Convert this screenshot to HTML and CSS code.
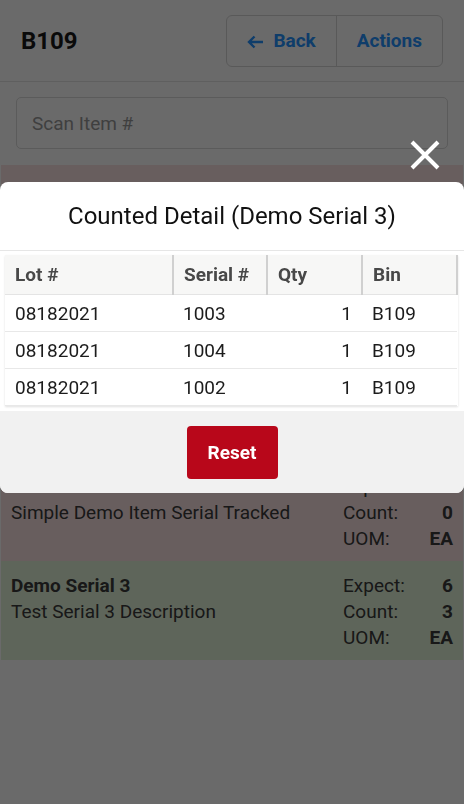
FILE: index.html
```html
<!DOCTYPE html>
<html lang="en">
<head>
  <meta charset="UTF-8">
  <meta name="viewport" content="width=device-width, initial-scale=1.0">
  <title>Bin Count</title>
  <link rel="stylesheet" href="styles.css">
</head>
<body>
  <header class="topbar">
    <h1>B109</h1>
    <div class="btn-group">
      <button class="btn">
        <svg class="arrow" width="17" height="14" viewBox="0 0 17 14"><path d="M16 7H2M7.5 1.5L2 7l5.5 5.5" fill="none" stroke="currentColor" stroke-width="2.4"/></svg>
        Back
      </button>
      <button class="btn">Actions</button>
    </div>
  </header>

  <div class="search">
    <input type="text" placeholder="Scan Item #">
  </div>

  <main class="items">
    <div class="item uncounted">
      <div class="item-info">
        <div class="item-name">Demo - 0017 Serial</div>
        <div>Simple Demo Item Serial Tracked</div>
      </div>
      <div class="item-qty">
        <span>Expect:</span><b>2</b>
        <span>Count:</span><b>0</b>
        <span>UOM:</span><b>EA</b>
      </div>
    </div>
    <div class="item uncounted">
      <div class="item-info">
        <div class="item-name">Demo - 0018 Serial</div>
        <div>Simple Demo Item Serial Tracked</div>
      </div>
      <div class="item-qty">
        <span>Expect:</span><b>1</b>
        <span>Count:</span><b>0</b>
        <span>UOM:</span><b>EA</b>
      </div>
    </div>
    <div class="item uncounted">
      <div class="item-info">
        <div class="item-name">Demo - 0019 Serial</div>
        <div>Simple Demo Item Serial Tracked</div>
      </div>
      <div class="item-qty">
        <span>Expect:</span><b>3</b>
        <span>Count:</span><b>0</b>
        <span>UOM:</span><b>EA</b>
      </div>
    </div>
    <div class="item uncounted">
      <div class="item-info">
        <div class="item-name">Demo - 0020 Serial</div>
        <div>Simple Demo Item Serial Tracked</div>
      </div>
      <div class="item-qty">
        <span>Expect:</span><b>5</b>
        <span>Count:</span><b>0</b>
        <span>UOM:</span><b>EA</b>
      </div>
    </div>
    <div class="item partial">
      <div class="item-info">
        <div class="item-name">Demo Serial 3</div>
        <div>Test Serial 3 Description</div>
      </div>
      <div class="item-qty">
        <span>Expect:</span><b>6</b>
        <span>Count:</span><b>3</b>
        <span>UOM:</span><b>EA</b>
      </div>
    </div>
  </main>

  <div class="backdrop"></div>

  <button class="close-btn" aria-label="Close">
    <svg width="30" height="30" viewBox="0 0 30 30"><path d="M2 2L28 28M28 2L2 28" stroke="#fff" stroke-width="4"/></svg>
  </button>

  <div class="modal">
    <h2 class="modal-title">Counted Detail (Demo Serial 3)</h2>
    <div class="modal-body">
      <table class="detail-table">
        <thead>
          <tr><th class="col-lot">Lot #</th><th class="col-serial">Serial #</th><th class="col-qty">Qty</th><th class="col-bin">Bin</th></tr>
        </thead>
        <tbody>
          <tr><td>08182021</td><td>1003</td><td class="num">1</td><td>B109</td></tr>
          <tr><td>08182021</td><td>1004</td><td class="num">1</td><td>B109</td></tr>
          <tr><td>08182021</td><td>1002</td><td class="num">1</td><td>B109</td></tr>
        </tbody>
      </table>
    </div>
    <div class="modal-footer">
      <button class="reset-btn">Reset</button>
    </div>
  </div>
</body>
</html>
```

FILE: styles.css
```css
body {
  font-family: Roboto, "Noto Sans", sans-serif;
  background: #fff;
  color: #222;
  margin: 0;
  padding: 0;
  height: 804px;
  overflow: hidden;
}

button {
  font-family: inherit;
  cursor: pointer;
}

.topbar {
  display: flex;
  align-items: center;
  justify-content: space-between;
  height: 82px;
  padding: 0 21px;
  border-bottom: 1px solid #e4e4e4;
  box-sizing: border-box;
}

.topbar h1 {
  margin: 0;
  font-size: 24px;
  font-weight: bold;
  color: #1a1a1a;
}

.btn-group {
  display: flex;
  height: 52px;
  border: 1px solid #d6d6d6;
  border-radius: 6px;
  box-sizing: border-box;
}

.btn {
  display: flex;
  align-items: center;
  gap: 9px;
  background: none;
  border: none;
  padding: 0 20px;
  font-size: 19px;
  font-weight: bold;
  color: #2592ff;
}

.btn + .btn {
  border-left: 1px solid #d6d6d6;
}

.arrow {
  margin-top: 2px;
}

.search {
  padding: 15px 16px 16px;
}

.search input {
  width: 100%;
  height: 52px;
  box-sizing: border-box;
  border: 1px solid #dadada;
  border-radius: 5px;
  padding: 0 15px;
  font-family: inherit;
  font-size: 19px;
}

.search input::placeholder {
  color: #999;
}

.items {
  padding: 0 1px;
}

.item {
  display: flex;
  justify-content: space-between;
  height: 99px;
  padding: 12px 10px 0;
  box-sizing: border-box;
  font-size: 19px;
  line-height: 26px;
  color: #3a3a3a;
}

.uncounted {
  background: #fae3e3;
}

.partial {
  background: #e2f2d8;
}

.item-name {
  font-weight: bold;
}

.item-qty {
  display: grid;
  grid-template-columns: 70px 40px;
  grid-auto-rows: 26px;
  width: 110px;
}

.item-qty b {
  text-align: right;
}

.backdrop {
  position: fixed;
  inset: 0;
  background: rgba(0, 0, 0, 0.585);
}

.close-btn {
  position: fixed;
  top: 140px;
  left: 410px;
  padding: 0;
  border: none;
  background: none;
  width: 30px;
  height: 30px;
}

.modal {
  position: fixed;
  top: 182px;
  left: 0;
  right: 0;
  background: #fff;
  border-radius: 8px;
  overflow: hidden;
}

.modal-title {
  margin: 0;
  height: 68px;
  line-height: 68px;
  text-align: center;
  font-size: 24px;
  font-weight: normal;
  color: #111;
  border-bottom: 1px solid #e6e6e6;
}

.modal-body {
  padding: 4px 6px 5px 5px;
}

.detail-table {
  width: 100%;
  border-collapse: collapse;
  font-size: 19px;
  box-shadow: 0 1px 2px rgba(0, 0, 0, 0.12);
}

.detail-table th {
  height: 39px;
  background: #f7f7f6;
  color: #484848;
  text-align: left;
  padding: 0 10px;
  border-right: 2px solid #d0d0d0;
  border-bottom: 1px solid #e4e4e4;
}

.detail-table td {
  height: 36px;
  padding: 0 10px;
  color: #1c1c1c;
  border-bottom: 1px solid #e8e8e8;
}

.detail-table .num {
  text-align: right;
}

.col-lot {
  width: 147px;
}

.col-serial {
  width: 72px;
}

.col-qty {
  width: 73px;
}

.modal-footer {
  background: #f1f1f1;
  display: flex;
  justify-content: center;
  padding: 15px 0 14px;
}

.reset-btn {
  width: 91px;
  height: 53px;
  background: #b8071a;
  color: #fff;
  border: none;
  border-radius: 4px;
  font-size: 19px;
  font-weight: bold;
}
```
